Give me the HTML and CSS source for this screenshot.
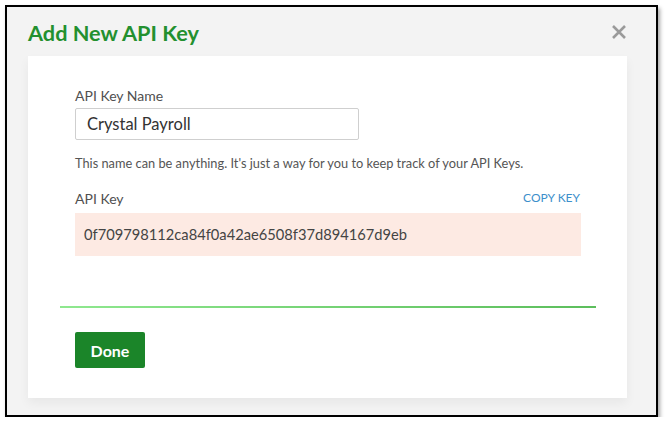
FILE: index.html
```html
<!DOCTYPE html>
<html>
<head>
<meta charset="utf-8">
<link rel="stylesheet" href="styles.css">
</head>
<body>
<div class="frame">
  <div class="header">
    <h1 class="title">Add New API Key</h1>
    <svg class="close" width="16" height="16" viewBox="0 0 16 16"><path d="M2 2 L14 14 M14 2 L2 14" stroke="#9a9a9a" stroke-width="2.6" stroke-linecap="butt"/></svg>
  </div>
  <div class="card">
    <div class="label">API Key Name</div>
    <div class="input">Crystal Payroll</div>
    <div class="help">This name can be anything. It's just a way for you to keep track of your API Keys.</div>
    <div class="keyrow">
      <span class="label">API Key</span>
      <span class="copy">COPY KEY</span>
    </div>
    <div class="keybox">0f709798112ca84f0a42ae6508f37d894167d9eb</div>
    <div class="divider"></div>
    <div class="actions"><button class="done">Done</button></div>
  </div>
</div>
</body>
</html>
```
FILE: styles.css
```css
* { box-sizing: border-box; }
body {
  margin: 0;
  background: #fff;
  font-family: Lato, "Open Sans", sans-serif;
}
.frame {
  margin: 5px 0 0 5px;
  width: 653px;
  height: 412px;
  border: 2px solid #000;
  background: #f3f3f3;
  box-shadow: 2px 3px 4px rgba(0,0,0,0.35);
  padding: 0 29px 0 21px;
}
.header {
  height: 49px;
  display: flex;
  align-items: center;
  justify-content: space-between;
}
.title {
  margin: 0;
  font-size: 21.7px;
  font-weight: 700;
  color: #23902f;
  line-height: 26px;
  padding-top: 2px;
}
.close { display: block; margin-top: 1px; }
.card {
  background: #fff;
  height: 342px;
  padding: 31px 46px 30px 47px;
  box-shadow: 0 5px 10px rgba(0,0,0,0.05);
}
.label {
  font-size: 14px;
  line-height: 17px;
  color: #505050;
}
.input {
  margin-top: 4px;
  width: 284px;
  height: 32px;
  border: 1px solid #cfcfcf;
  border-radius: 2px;
  padding: 0 11px;
  font-size: 16.5px;
  line-height: 30px;
  color: #333;
}
.help {
  margin-top: 16px;
  font-size: 12.8px;
  line-height: 15px;
  color: #555;
}
.keyrow {
  margin-top: 19px;
  display: flex;
  justify-content: space-between;
  align-items: center;
}
.copy {
  font-size: 12px;
  color: #3c8fcb;
  line-height: 17px;
  margin-top: -2px;
  margin-right: 1px;
}
.keybox {
  margin-top: 6px;
  height: 43px;
  background: #fdeae3;
  padding: 0 9px;
  font-size: 14.7px;
  line-height: 43px;
  color: #444;
}
.divider {
  margin: 50px -15px 0 -15px;
  height: 2px;
  background: linear-gradient(to right, #8fe88f, #5cbe5c);
}
.actions { margin-top: 24px; }
.done {
  width: 70px;
  height: 36px;
  border: none;
  border-radius: 2px;
  background: #1b8529;
  color: #fff;
  font-family: Lato, sans-serif;
  font-weight: 700;
  font-size: 16px;
  padding: 0;
}
```
